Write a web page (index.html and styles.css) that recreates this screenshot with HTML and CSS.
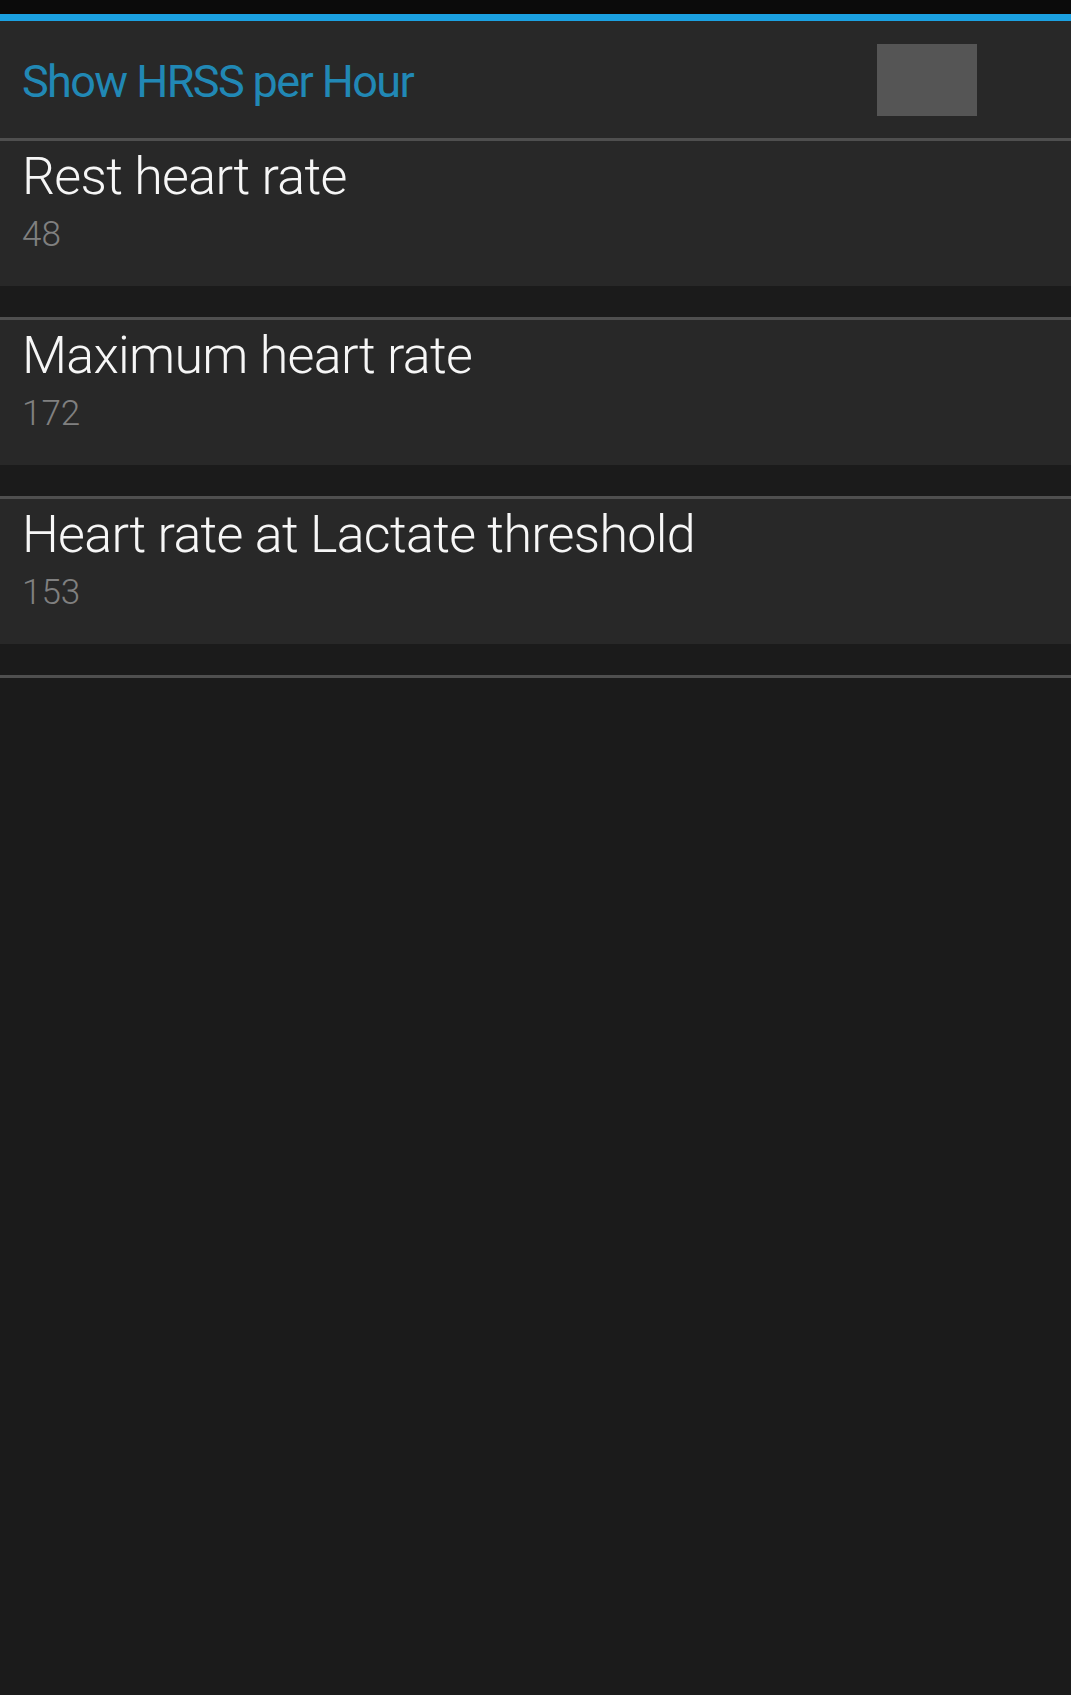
FILE: index.html
```html
<!DOCTYPE html>
<html lang="en">
<head>
    <meta charset="UTF-8" />
    <meta name="viewport" content="width=device-width, initial-scale=1.0" />
    <title>Heart rate settings</title>
    <link rel="stylesheet" href="styles.css">
</head>
<body>
    <div class="statusbar"></div>
    <div class="accent"></div>

    <!-- HEADER / CATEGORY -->
    <div class="header">
        <div class="header-title">Show HRSS per Hour</div>
        <div class="checkbox"></div>
    </div>
    <div class="divider"></div>

    <!-- PREFERENCES -->
    <div class="pref">
        <div class="pref-title">Rest heart rate</div>
        <div class="pref-summary">48</div>
    </div>
    <div class="gap"></div>
    <div class="divider"></div>

    <div class="pref">
        <div class="pref-title">Maximum heart rate</div>
        <div class="pref-summary">172</div>
    </div>
    <div class="gap"></div>
    <div class="divider"></div>

    <div class="pref">
        <div class="pref-title">Heart rate at Lactate threshold</div>
        <div class="pref-summary">153</div>
    </div>
    <div class="gap"></div>
    <div class="divider"></div>
</body>
</html>
```

FILE: styles.css
```css
html, body {
    margin: 0;
    padding: 0;
    background: #1b1b1b;
    font-family: Roboto, "Liberation Sans", sans-serif;
}
body {
    width: 1071px;
    min-height: 1695px;
}
.statusbar {
    height: 14px;
    background: #0b0b0b;
}
.accent {
    height: 7px;
    background: #1ba1e2;
}
.header {
    height: 117px;
    background: #282828;
    display: flex;
    justify-content: space-between;
    align-items: center;
    padding: 0 94px 0 22px;
}
.header-title {
    color: #2188b5;
    font-size: 45px;
    letter-spacing: -1.6px;
    line-height: 52px;
    margin-top: 4px;
}
.checkbox {
    width: 100px;
    height: 72px;
    background: #555555;
}
.divider {
    height: 3px;
    background: #4f4f4f;
}
.pref {
    height: 145px;
    box-sizing: border-box;
    padding: 6px 22px 0 22px;
    background: #282828;
}
.pref-title {
    color: #f6f6f6;
    font-size: 52px;
    font-weight: 300;
    letter-spacing: -0.7px;
    line-height: 60px;
}
.pref-summary {
    color: #808080;
    font-size: 35px;
    font-weight: 300;
    line-height: 40px;
    margin-top: 8px;
}
.gap {
    height: 31px;
}
```
